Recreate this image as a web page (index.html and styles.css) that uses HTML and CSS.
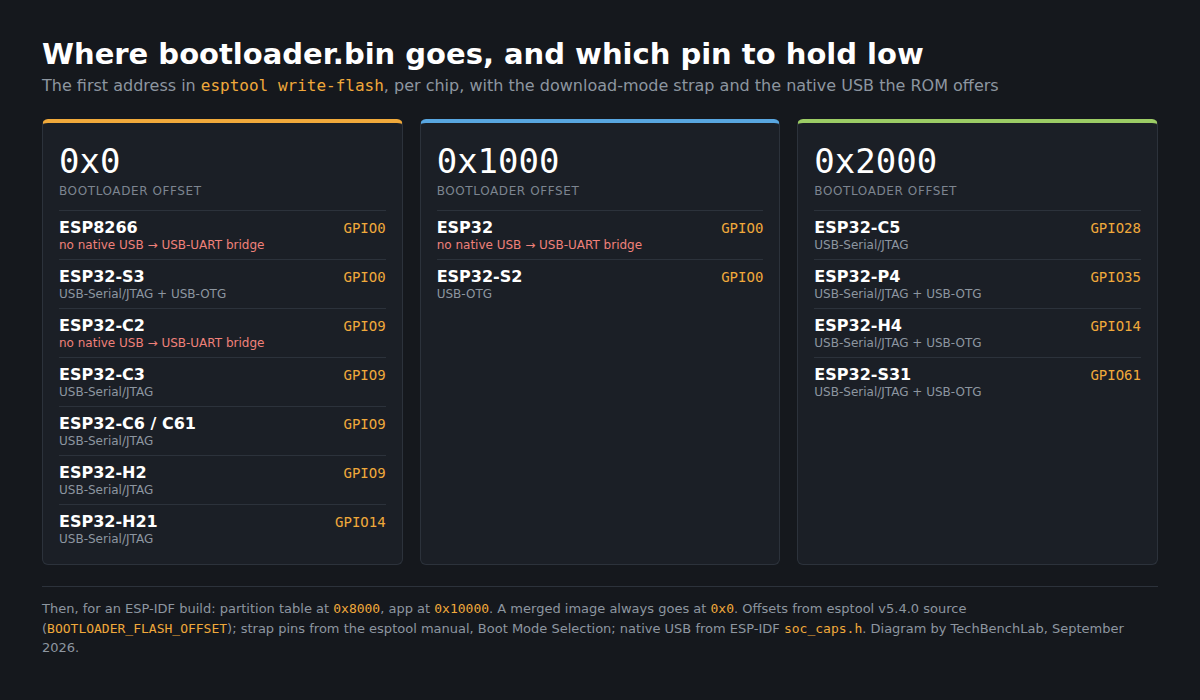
FILE: index.html
```html
<!DOCTYPE html>
<html lang="en">
<head>
<meta charset="utf-8">
<title>Bootloader offsets</title>
<link rel="stylesheet" href="styles.css">
</head>
<body>
<main class="page">
  <h1 class="title">Where bootloader.bin goes, and which pin to hold low</h1>
  <p class="subtitle">The first address in <code class="code">esptool write-flash</code>, per chip, with the download-mode strap and the native USB the ROM offers</p>

  <section class="grid">
    <article class="card card-orange">
      <div class="hex">0x0</div>
      <div class="label">Bootloader offset</div>
      <ul class="rows">
        <li class="row"><div class="chip"><div class="name">ESP8266</div><div class="usb warn">no native USB → USB-UART bridge</div></div><span class="pin">GPIO0</span></li>
        <li class="row"><div class="chip"><div class="name">ESP32-S3</div><div class="usb">USB-Serial/JTAG + USB-OTG</div></div><span class="pin">GPIO0</span></li>
        <li class="row"><div class="chip"><div class="name">ESP32-C2</div><div class="usb warn">no native USB → USB-UART bridge</div></div><span class="pin">GPIO9</span></li>
        <li class="row"><div class="chip"><div class="name">ESP32-C3</div><div class="usb">USB-Serial/JTAG</div></div><span class="pin">GPIO9</span></li>
        <li class="row"><div class="chip"><div class="name">ESP32-C6 / C61</div><div class="usb">USB-Serial/JTAG</div></div><span class="pin">GPIO9</span></li>
        <li class="row"><div class="chip"><div class="name">ESP32-H2</div><div class="usb">USB-Serial/JTAG</div></div><span class="pin">GPIO9</span></li>
        <li class="row"><div class="chip"><div class="name">ESP32-H21</div><div class="usb">USB-Serial/JTAG</div></div><span class="pin">GPIO14</span></li>
      </ul>
    </article>

    <article class="card card-blue">
      <div class="hex">0x1000</div>
      <div class="label">Bootloader offset</div>
      <ul class="rows">
        <li class="row"><div class="chip"><div class="name">ESP32</div><div class="usb warn">no native USB → USB-UART bridge</div></div><span class="pin">GPIO0</span></li>
        <li class="row"><div class="chip"><div class="name">ESP32-S2</div><div class="usb">USB-OTG</div></div><span class="pin">GPIO0</span></li>
      </ul>
    </article>

    <article class="card card-green">
      <div class="hex">0x2000</div>
      <div class="label">Bootloader offset</div>
      <ul class="rows">
        <li class="row"><div class="chip"><div class="name">ESP32-C5</div><div class="usb">USB-Serial/JTAG</div></div><span class="pin">GPIO28</span></li>
        <li class="row"><div class="chip"><div class="name">ESP32-P4</div><div class="usb">USB-Serial/JTAG + USB-OTG</div></div><span class="pin">GPIO35</span></li>
        <li class="row"><div class="chip"><div class="name">ESP32-H4</div><div class="usb">USB-Serial/JTAG + USB-OTG</div></div><span class="pin">GPIO14</span></li>
        <li class="row"><div class="chip"><div class="name">ESP32-S31</div><div class="usb">USB-Serial/JTAG + USB-OTG</div></div><span class="pin">GPIO61</span></li>
      </ul>
    </article>
  </section>

  <footer class="foot">
    <p class="foot-text">Then, for an ESP-IDF build: partition table at <code class="code">0x8000</code>, app at <code class="code">0x10000</code>. A merged image always goes at <code class="code">0x0</code>. Offsets from esptool v5.4.0 source (<code class="code">BOOTLOADER_FLASH_OFFSET</code>); strap pins from the esptool manual, Boot Mode Selection; native USB from ESP-IDF <code class="code">soc_caps.h</code>. Diagram by TechBenchLab, September 2026.</p>
  </footer>
</main>
</body>
</html>
```

FILE: styles.css
```css
* { box-sizing: border-box; }

html, body {
  margin: 0;
  padding: 0;
  background: #15181d;
}

body {
  font-family: "DejaVu Sans", "Liberation Sans", sans-serif;
  color: #e6edf3;
}

.page {
  width: 1200px;
  height: 700px;
  padding: 36px 42px 0 42px;
}

.title {
  margin: 0;
  font-size: 29px;
  line-height: 36px;
  font-weight: bold;
  color: #ffffff;
}

.subtitle {
  margin: 3px 0 0 0;
  font-size: 16px;
  line-height: 22px;
  color: #8d96a0;
}

.code {
  font-family: "DejaVu Sans Mono", "Liberation Mono", monospace;
  color: #f0a93b;
}

.grid {
  display: grid;
  grid-template-columns: repeat(3, 1fr);
  gap: 17px;
  margin-top: 22px;
}

.card {
  background: #1b1f26;
  border: 1px solid #2c323b;
  border-top-width: 4px;
  border-radius: 6px;
  padding: 18px 16px 12px 16px;
  height: 446px;
}

.card-orange { border-top-color: #f0a93b; }
.card-blue { border-top-color: #58a6e0; }
.card-green { border-top-color: #9ccc65; }

.hex {
  font-family: "DejaVu Sans Mono", "Liberation Mono", monospace;
  font-size: 34px;
  line-height: 40px;
  color: #ffffff;
}

.label {
  margin-top: 2px;
  font-size: 12px;
  line-height: 16px;
  text-transform: uppercase;
  letter-spacing: 0.05em;
  color: #7d8590;
}

.rows {
  list-style: none;
  margin: 11px 0 0 0;
  padding: 0;
}

.row {
  display: flex;
  justify-content: space-between;
  align-items: baseline;
  border-top: 1px solid #2c323b;
  padding: 7px 0 6px 0;
}

.name {
  font-size: 16px;
  line-height: 20px;
  font-weight: bold;
  color: #ffffff;
}

.usb {
  font-size: 12px;
  line-height: 15px;
  color: #8d96a0;
}

.usb.warn { color: #f0817a; }

.pin {
  font-family: "DejaVu Sans Mono", "Liberation Mono", monospace;
  font-size: 14px;
  line-height: 20px;
  color: #f0a93b;
}

.foot {
  margin-top: 21px;
  border-top: 1px solid #2c323b;
  padding-top: 12px;
}

.foot-text {
  margin: 0;
  font-size: 13px;
  line-height: 19.5px;
  color: #8d96a0;
}

.foot-text .code {
  line-height: 1;
}
```
